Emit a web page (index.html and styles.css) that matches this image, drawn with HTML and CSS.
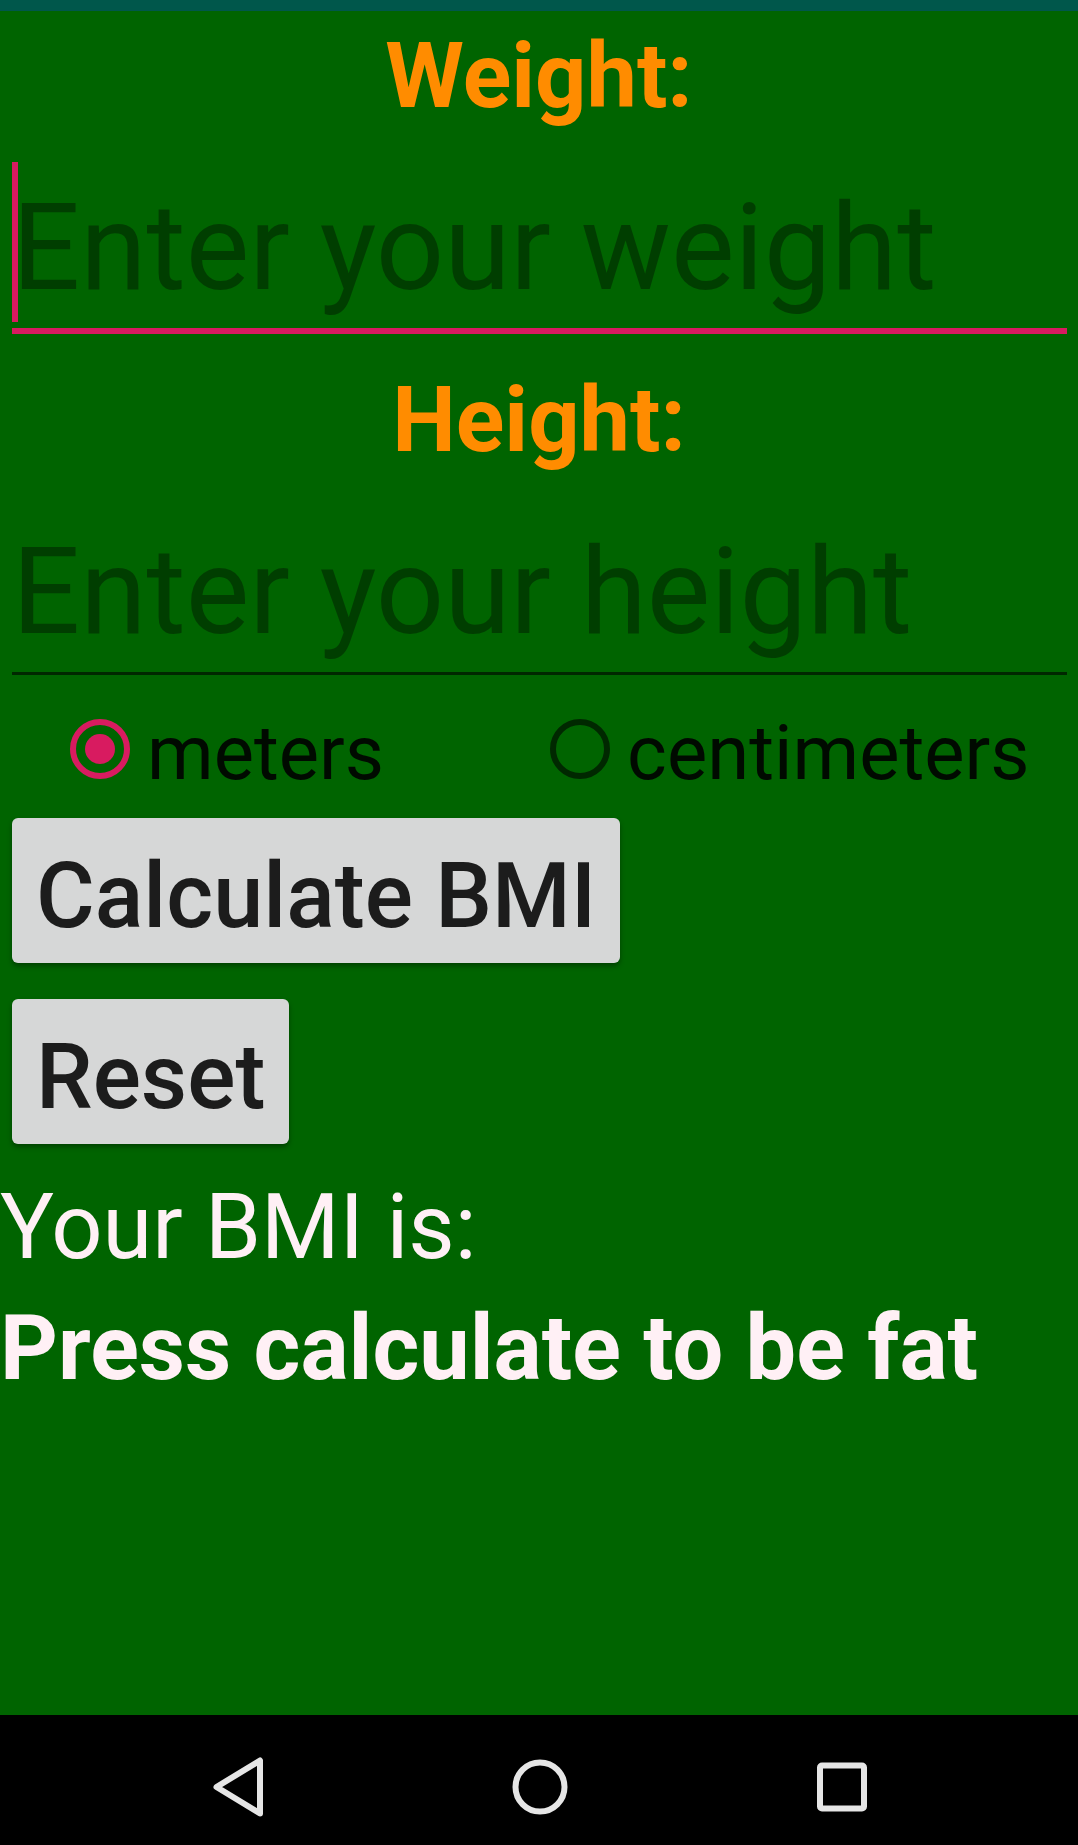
FILE: index.html
```html
<!DOCTYPE html>
<html lang="en">
<head>
<meta charset="utf-8">
<title>BMI Calculator</title>
<link rel="stylesheet" href="styles.css">
</head>
<body>
<div class="screen">
  <div class="status-bar"></div>
  <main class="content">
    <h2 class="label label-weight">Weight:</h2>
    <div class="field field-focused">
      <span class="caret"></span>
      <input class="input" type="text" placeholder="Enter your weight">
    </div>
    <h2 class="label label-height">Height:</h2>
    <div class="field">
      <input class="input" type="text" placeholder="Enter your height">
    </div>
    <div class="radios">
      <label class="radio radio-checked">
        <span class="radio-ring"><span class="radio-dot"></span></span>
        <span class="radio-text">meters</span>
      </label>
      <label class="radio">
        <span class="radio-ring"></span>
        <span class="radio-text">centimeters</span>
      </label>
    </div>
    <button class="btn btn-calc" type="button">Calculate BMI</button>
    <button class="btn btn-reset" type="button">Reset</button>
    <p class="result-title">Your BMI is:</p>
    <p class="result-value">Press calculate to be fat</p>
  </main>
  <nav class="nav-bar">
    <span class="nav-icon">
      <svg width="60" height="60" viewBox="0 0 60 60">
        <path d="M52 3.5 L52 56.5 L8.5 30 Z" fill="none" stroke="#e6e6e6" stroke-width="6" stroke-linejoin="round"/>
      </svg>
    </span>
    <span class="nav-icon">
      <svg width="60" height="60" viewBox="0 0 60 60">
        <circle cx="30" cy="30" r="24.5" fill="none" stroke="#e6e6e6" stroke-width="6"/>
      </svg>
    </span>
    <span class="nav-icon">
      <svg width="60" height="60" viewBox="0 0 60 60">
        <rect x="8" y="8.5" width="44" height="43" rx="2" fill="none" stroke="#e6e6e6" stroke-width="6"/>
      </svg>
    </span>
  </nav>
</div>
</body>
</html>
```
FILE: styles.css
```css
html, body {
  margin: 0;
  padding: 0;
}

body {
  background: #006400;
  font-family: Roboto, "Liberation Sans", sans-serif;
}

.screen {
  width: 1078px;
  height: 1845px;
  display: flex;
  flex-direction: column;
  background: #006400;
  overflow: hidden;
}

.status-bar {
  height: 11px;
  background: #00574B;
  flex: none;
}

.content {
  flex: 1;
  display: flex;
  flex-direction: column;
  align-items: flex-start;
}

.label {
  align-self: stretch;
  margin: 0;
  text-align: center;
  color: #FF8C00;
  font-size: 90px;
  font-weight: 700;
  line-height: 105.5px;
}

.label-weight {
  margin-top: 12.5px;
}

.label-height {
  margin-top: 33.5px;
}

.field {
  position: relative;
  align-self: stretch;
  margin: 0 11px 0 12px;
  padding-top: 48.5px;
  padding-bottom: 10px;
  border-bottom: 3px solid rgba(0, 0, 0, 0.6);
}

.field-focused {
  border-bottom: 6px solid #D81B60;
}

.caret {
  position: absolute;
  left: 0;
  top: 33px;
  width: 6px;
  height: 160px;
  background: #D81B60;
}

.input {
  display: block;
  width: 100%;
  height: 140.5px;
  margin: 0;
  padding: 0;
  border: 0;
  outline: none;
  background: transparent;
  font-family: Roboto, "Liberation Sans", sans-serif;
  font-size: 120px;
  color: #000;
}

.input::placeholder {
  color: rgba(0, 0, 0, 0.38);
  opacity: 1;
}

.radios {
  display: flex;
  padding: 33.5px 0 0 70px;
  gap: 166px;
}

.radio {
  display: flex;
  align-items: flex-start;
  gap: 17px;
}

.radio-ring {
  box-sizing: border-box;
  width: 60px;
  height: 60px;
  margin-top: 10.5px;
  border-radius: 50%;
  border: 6px solid rgba(0, 0, 0, 0.6);
  display: flex;
  align-items: center;
  justify-content: center;
}

.radio-checked .radio-ring {
  border-color: #D81B60;
}

.radio-dot {
  width: 30px;
  height: 30px;
  border-radius: 50%;
  background: #D81B60;
}

.radio-text {
  font-size: 76px;
  line-height: 89px;
  color: rgba(0, 0, 0, 0.9);
}

.btn {
  margin: 0 0 0 12px;
  padding: 12px 24px 0 24px;
  height: 145px;
  border: 0;
  border-radius: 6px;
  background: #D6D7D7;
  box-shadow: 0 3px 5px rgba(0, 0, 0, 0.35);
  font-family: Roboto, "Liberation Sans", sans-serif;
  font-size: 90px;
  font-weight: 500;
  line-height: 133px;
  color: #1C1C1C;
  text-align: left;
  white-space: nowrap;
}

.btn-calc {
  margin-top: 20.5px;
}

.btn-reset {
  margin-top: 36px;
}

.result-title {
  margin: 30.5px 0 0;
  font-size: 90px;
  line-height: 105.5px;
  color: #FFF0F5;
}

.result-value {
  margin: 15.5px 0 0;
  font-size: 90px;
  font-weight: 700;
  line-height: 105.5px;
  color: #FFF0F5;
}

.nav-bar {
  flex: none;
  height: 130px;
  box-sizing: border-box;
  background: #000;
  display: flex;
  align-items: center;
  padding: 14px 0 0 208px;
  gap: 242px;
}

.nav-icon {
  display: block;
  width: 60px;
  height: 60px;
}

.nav-icon svg {
  display: block;
}
```
